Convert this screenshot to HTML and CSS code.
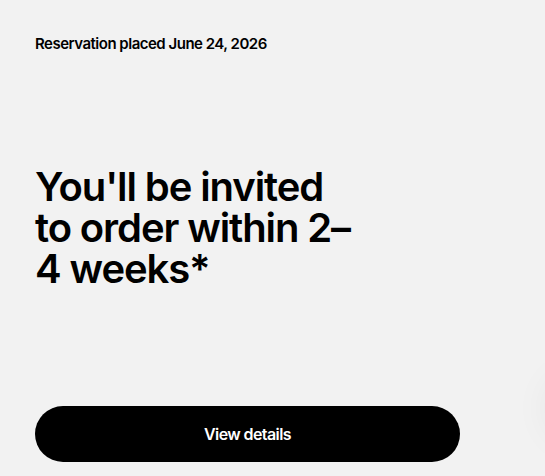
FILE: index.html
```html
<!DOCTYPE html>
<html lang="en">
<head>
    <meta charset="UTF-8">
    <meta name="viewport" content="width=device-width, initial-scale=1.0">
    <title>Reservation</title>
    <link rel="stylesheet" href="styles.css">
</head>
<body>

    <main class="reservation">
        <p class="placed">Reservation placed June 24, 2026</p>
        <h1 class="headline">You'll be invited to order within 2&ndash;4&nbsp;weeks*</h1>
        <button class="details-btn">View details</button>
    </main>

    <div class="chat-bubble"></div>

</body>
</html>
```

FILE: styles.css
```css
body {
    background: #f2f2f2;
    margin: 0;
    font-family: 'Inter', 'Liberation Sans', sans-serif;
    color: #000;
    overflow: hidden;
}

.reservation {
    display: flex;
    flex-direction: column;
    align-items: flex-start;
    height: 100vh;
    box-sizing: border-box;
    padding: 34px 85px 14px 35px;
}

.placed {
    margin: 0;
    font-size: 15px;
    font-weight: 600;
    letter-spacing: -0.5px;
}

.headline {
    margin: 113px 0 0;
    width: 320px;
    font-size: 40px;
    line-height: 41px;
    font-weight: 600;
    letter-spacing: -1.1px;
}

.details-btn {
    margin-top: auto;
    width: 100%;
    height: 56px;
    border: none;
    border-radius: 28px;
    background: #000;
    color: #fff;
    font-family: inherit;
    font-size: 16px;
    font-weight: 600;
    letter-spacing: -0.6px;
    cursor: pointer;
}

/* floating help button, mostly off screen */
.chat-bubble {
    position: fixed;
    right: -72px;
    top: 370px;
    width: 72px;
    height: 72px;
    border-radius: 50%;
    background: #f2f2f2;
    box-shadow: 0 2px 36px rgba(0, 0, 0, 0.05);
}
```
